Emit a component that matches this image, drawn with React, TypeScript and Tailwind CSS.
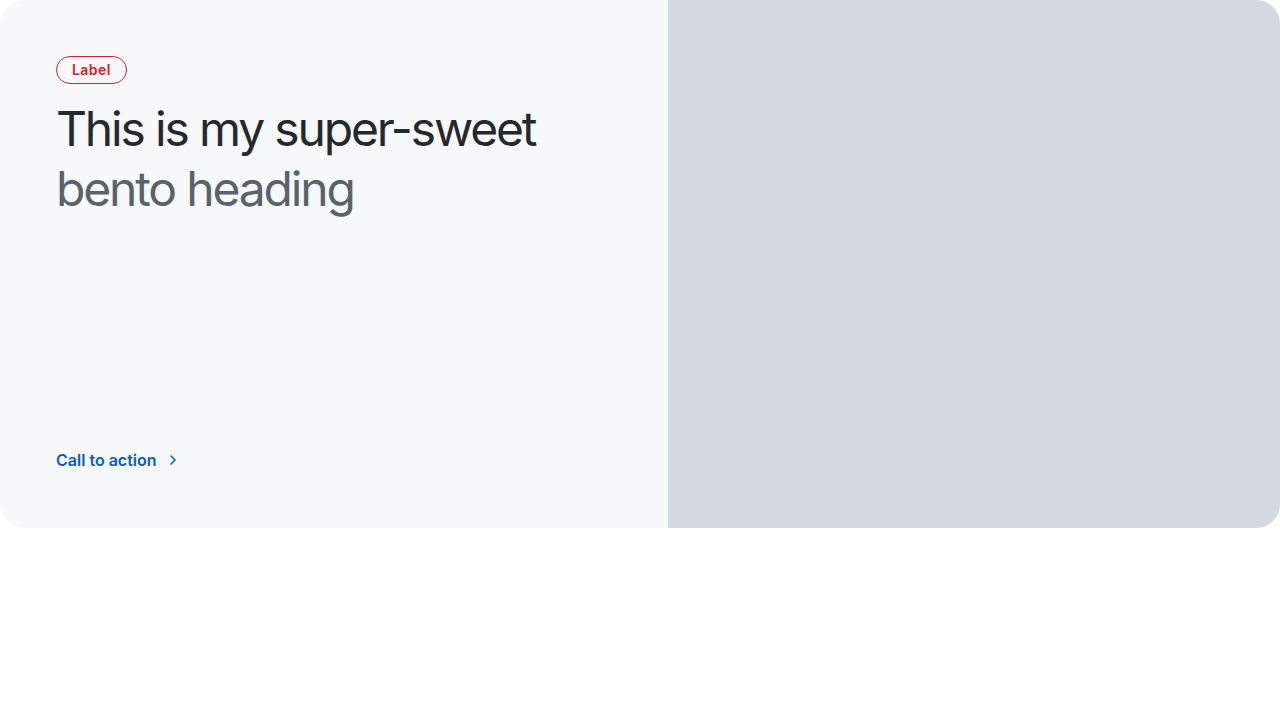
export default function App(){
    return(
        <div className="w-[1280px] h-[720px] bg-white" style={{fontFamily: 'Inter, "Noto Sans", sans-serif'}}>
            <div className="flex h-[528px] rounded-[24px] overflow-hidden">
                <div className="w-[668px] bg-[#f6f8fa] p-14 flex flex-col justify-between">
                    <div className="flex flex-col items-start">
                        <span className="h-[28px] px-[15px] rounded-full border border-[#cf222e] text-[#cf222e] text-[14px] font-semibold leading-[26px] tracking-[0.03em]">Label</span>
                        <h1 className="mt-[15px] text-[48px] leading-[60px] tracking-[-0.045em] font-normal">
                            <span className="text-[#24292f]">This is my super-sweet</span><br/>
                            <span className="text-[#59636e]">bento heading</span>
                        </h1>
                    </div>
                    <a href="#" className="flex items-center gap-[8px] text-[#0a5bbd] text-[16px] font-semibold leading-[24px] tracking-[0em]">
                        Call to action
                        <svg width="16" height="16" viewBox="0 0 16 16" fill="none" stroke="currentColor" strokeWidth="1.6" strokeLinecap="round" strokeLinejoin="round">
                            <path d="M6 4l4 4-4 4"/>
                        </svg>
                    </a>
                </div>
                <div className="flex-1 bg-[#d4d9e1]"></div>
            </div>
        </div>
    )
}
